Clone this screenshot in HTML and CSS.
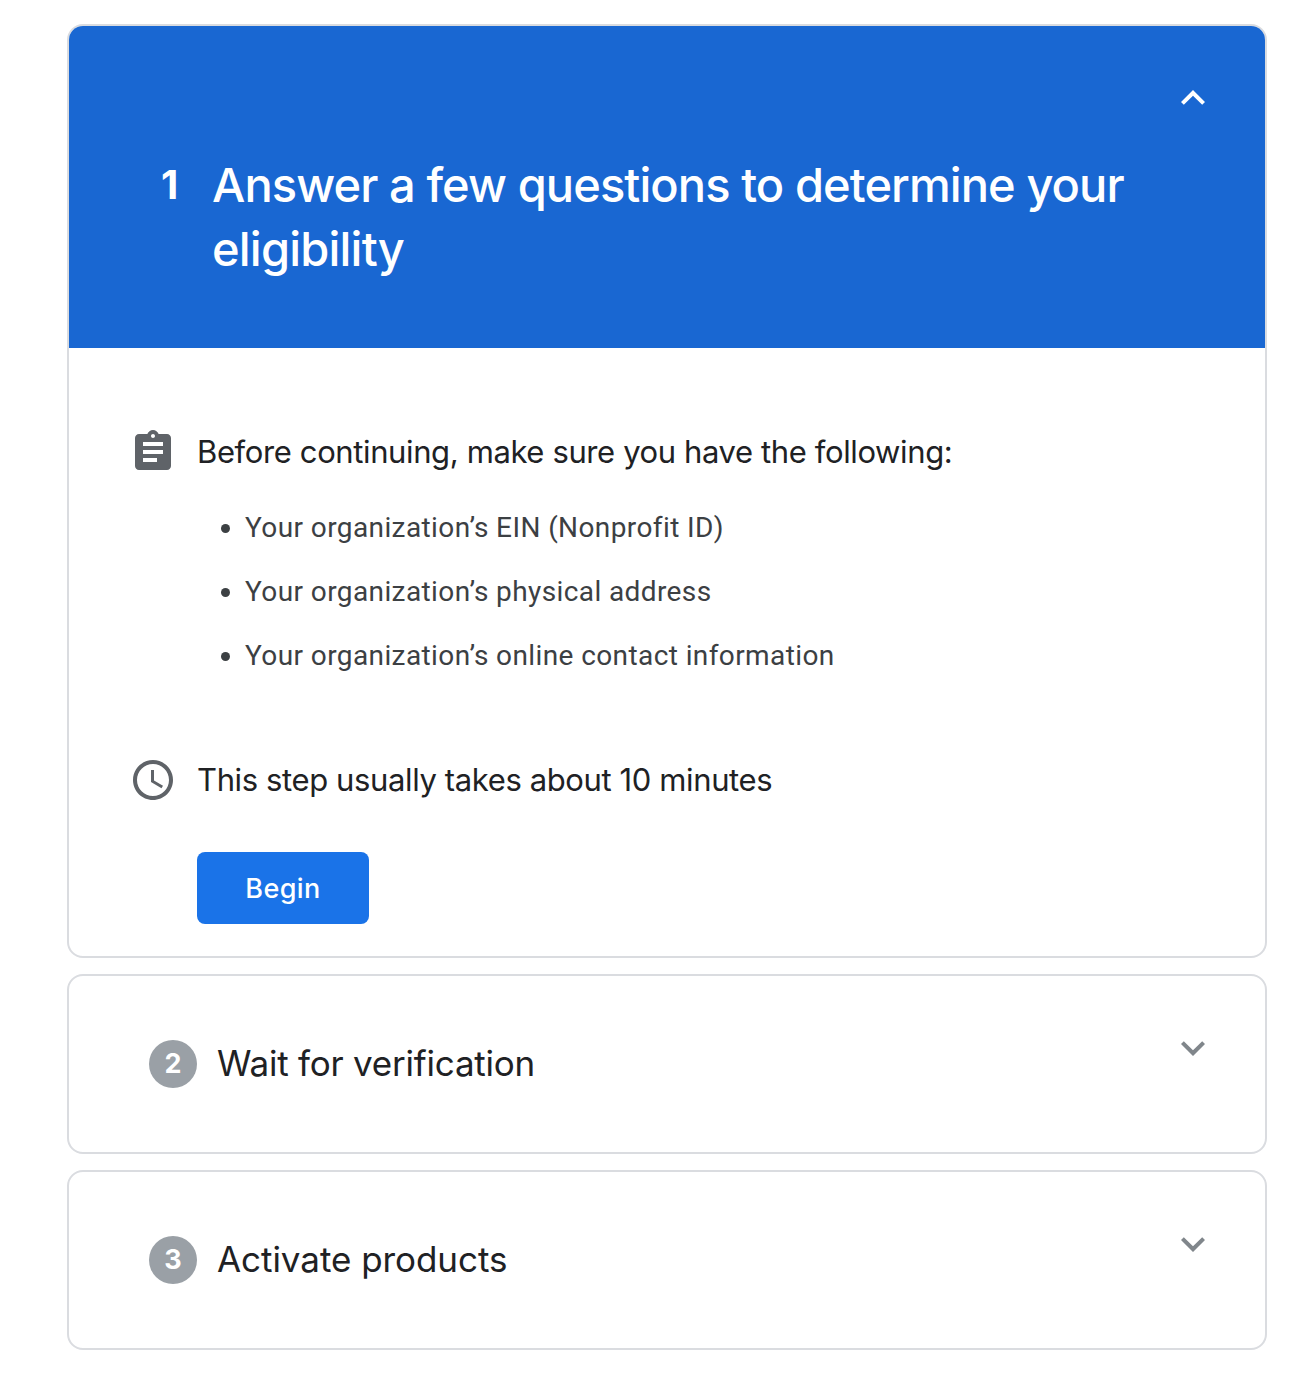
FILE: index.html
```html
<!DOCTYPE html>
<html lang="en">
<head>
    <meta charset="UTF-8">
    <meta name="viewport" content="width=device-width, initial-scale=1.0">
    <title>Get started</title>
    <link rel="stylesheet" href="styles.css">
</head>
<body>
    <div class="steps">
        <section class="card">
            <div class="card-header">
                <svg class="icon chevron" viewBox="0 0 24 24"><path d="M12 8l-6 6 1.41 1.41L12 10.83l4.59 4.58L18 14z"/></svg>
                <div class="header-row">
                    <span class="header-number">1</span>
                    <h1><span class="line-one">Answer a few questions to determine your</span> <span class="line-two">eligibility</span></h1>
                </div>
            </div>
            <div class="card-body">
                <div class="info-row">
                    <svg class="icon" viewBox="0 0 24 24"><path d="M19 3h-4.18C14.4 1.84 13.3 1 12 1s-2.4.84-2.82 2H5c-1.1 0-2 .9-2 2v14c0 1.1.9 2 2 2h14c1.1 0 2-.9 2-2V5c0-1.1-.9-2-2-2zm-7 0c.55 0 1 .45 1 1s-.45 1-1 1-1-.45-1-1 .45-1 1-1zm2 14H7v-2h7v2zm3-4H7v-2h10v2zm0-4H7V7h10v2z"/></svg>
                    <h2>Before continuing, make sure you have the following:</h2>
                </div>
                <ul>
                    <li>Your organization’s EIN (Nonprofit ID)</li>
                    <li>Your organization’s physical address</li>
                    <li>Your organization’s online contact information</li>
                </ul>
                <div class="info-row">
                    <svg class="icon" viewBox="0 0 24 24"><path d="M11.99 2C6.47 2 2 6.48 2 12s4.47 10 9.99 10C17.52 22 22 17.52 22 12S17.52 2 11.99 2zM12 20c-4.42 0-8-3.58-8-8s3.58-8 8-8 8 3.58 8 8-3.58 8-8 8z"/><path d="M12.5 7H11v6l5.25 3.15.75-1.23-4.5-2.67z"/></svg>
                    <h2>This step usually takes about 10 minutes</h2>
                </div>
                <button type="button">Begin</button>
            </div>
        </section>

        <section class="card collapsed">
            <span class="badge">2</span>
            <h3 class="verification">Wait for verification</h3>
            <svg class="icon chevron" viewBox="0 0 24 24"><path d="M16.59 8.59L12 13.17 7.41 8.59 6 10l6 6 6-6z"/></svg>
        </section>

        <section class="card collapsed">
            <span class="badge">3</span>
            <h3 class="products">Activate products</h3>
            <svg class="icon chevron" viewBox="0 0 24 24"><path d="M16.59 8.59L12 13.17 7.41 8.59 6 10l6 6 6-6z"/></svg>
        </section>
    </div>
</body>
</html>
```
FILE: styles.css
```css
* {
    box-sizing: border-box;
}
body {
    margin: 0;
    background-color: white;
    font-family: Inter, sans-serif;
    color: #202124;
}
h1, h2, h3 {
    margin: 0;
    font-weight: 400;
    white-space: nowrap;
}
.steps {
    display: flex;
    flex-direction: column;
    gap: 16px;
    width: 1200px;
    margin: 24px 0 0 67px;
}
.card {
    border: 2px solid #dadce0;
    border-radius: 16px;
    overflow: hidden;
}
.icon {
    flex: none;
    width: 48px;
    height: 48px;
    fill: #5f6368;
}
.card-header {
    display: flex;
    flex-direction: column;
    height: 322px;
    padding: 48px 48px 0 92px;
    background-color: #1967d2;
    color: white;
}
.card-header .chevron {
    align-self: flex-end;
    fill: white;
}
.header-row {
    display: flex;
    margin-top: 31px;
}
.header-number {
    width: 51px;
    font-size: 40px;
    font-weight: 650;
    line-height: 64px;
}
h1 {
    font-size: 47px;
    font-weight: 450;
    line-height: 64px;
}
h1 span {
    display: block;
}
.line-one {
    letter-spacing: -0.91px;
}
.line-two {
    letter-spacing: -0.8px;
}
.card-body {
    height: 608px;
    padding: 80px 60px 0;
}
.info-row {
    display: flex;
    align-items: center;
    gap: 20px;
}
h2 {
    font-size: 31px;
    line-height: 48px;
    letter-spacing: -0.38px;
}
ul {
    margin: 20px 0 68px;
    padding-left: 116px;
    font-family: Roboto, sans-serif;
    font-size: 28px;
    line-height: 64px;
    letter-spacing: 0.4px;
    color: #3c4043;
}
button {
    display: block;
    width: 172px;
    height: 72px;
    margin: 48px 0 0 68px;
    border: none;
    border-radius: 8px;
    background-color: #1a73e8;
    color: white;
    font-family: Inter, sans-serif;
    font-size: 27px;
    font-weight: 450;
    letter-spacing: 0.4px;
}
.collapsed {
    display: flex;
    height: 180px;
    padding: 48px 48px 0 80px;
}
.collapsed .chevron {
    margin-left: auto;
    fill: #80868b;
}
.badge {
    width: 48px;
    height: 48px;
    margin: 16px 20px 0 0;
    border-radius: 50%;
    background-color: #9aa0a6;
    color: white;
    font-size: 27px;
    font-weight: 700;
    line-height: 47px;
    text-align: center;
}
h3 {
    margin-top: 15px;
    font-size: 35px;
    line-height: 48px;
}
.verification {
    letter-spacing: -0.22px;
}
.products {
    letter-spacing: -0.05px;
}
```
